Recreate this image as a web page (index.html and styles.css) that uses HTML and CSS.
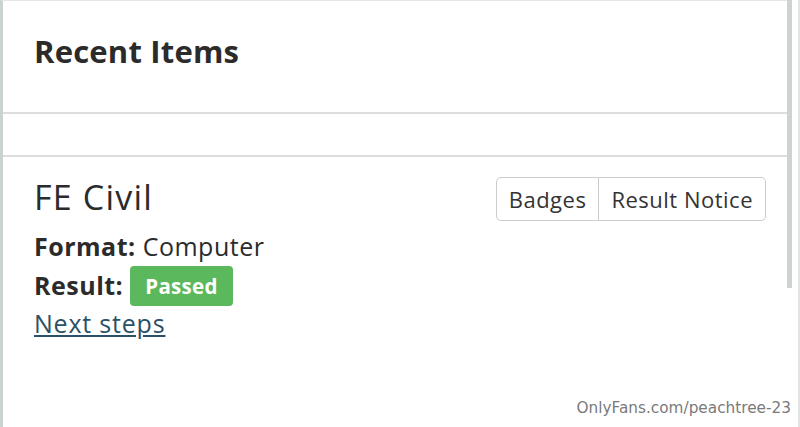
FILE: index.html
```html
<!DOCTYPE html>
<html lang="en">
<head>
    <meta charset="UTF-8">
    <meta name="viewport" content="width=device-width, initial-scale=1.0">
    <title>Recent Items</title>
    <link rel="stylesheet" href="styles.css">
</head>
<body>

<div class="page">
    <div class="panel">
        <div class="panel-head">
            <h2>Recent Items</h2>
        </div>
        <div class="panel-gap"></div>
        <div class="item">
            <div class="item-info">
                <h3>FE Civil</h3>
                <div class="row"><b>Format:</b> Computer</div>
                <div class="row"><b>Result:</b> <span class="badge">Passed</span></div>
                <a class="link" href="#">Next steps</a>
            </div>
            <div class="btn-group">
                <button class="btn">Badges</button>
                <button class="btn">Result Notice</button>
            </div>
        </div>
    </div>
    <div class="scroll">
        <div class="thumb"></div>
    </div>
</div>

<div class="mark">OnlyFans.com/peachtree-23</div>

</body>
</html>
```
FILE: styles.css
```css
body {
    margin: 0;
    padding: 0;
    background: white;
    font-family: "Open Sans", "Noto Sans", sans-serif;
    color: #2b2b2b;
}
.page {
    display: flex;
    height: 427px;
    overflow: hidden;
}
.panel {
    flex: 1;
    border-left: 3px solid #c9d3d2;
    border-top: 1px solid #e4e6e6;
}
.panel-head {
    height: 111px;
    border-bottom: 2px solid #dcdede;
    padding-left: 31px;
}
.panel-head h2 {
    margin: 0;
    padding-top: 29px;
    font-size: 31px;
    font-weight: 700;
    letter-spacing: 0.2px;
}
.panel-gap {
    height: 41px;
    border-bottom: 2px solid #dcdede;
}
.item {
    display: flex;
    justify-content: space-between;
    align-items: flex-start;
    padding: 20px 21px 0 31px;
}
.item h3 {
    margin: 0 0 10px 0;
    font-size: 34px;
    font-weight: 400;
    line-height: 40px;
    letter-spacing: 1.2px;
}
.row {
    font-size: 25px;
    line-height: 39px;
    letter-spacing: 0.5px;
}
.badge {
    display: inline-block;
    background-color: #5cb85c;
    color: white;
    font-size: 20.5px;
    font-weight: 700;
    line-height: 40px;
    padding: 0 15px;
    border-radius: 4px;
    vertical-align: top;
    letter-spacing: 0.3px;
}
.link {
    display: inline-block;
    font-size: 25px;
    line-height: 34px;
    letter-spacing: 0.8px;
    color: #2c5166;
}
.btn-group {
    display: flex;
}
.btn {
    font-family: "Open Sans", "Noto Sans", sans-serif;
    font-size: 22px;
    letter-spacing: 0.5px;
    color: #333;
    background: white;
    border: 1px solid #cccccc;
    height: 44px;
    padding: 0 12px;
}
.btn:first-child {
    border-radius: 5px 0 0 5px;
}
.btn:last-child {
    border-left: none;
    border-radius: 0 5px 5px 0;
}
.scroll {
    flex-shrink: 0;
    width: 11px;
    border-right: 2px solid #dfe3e3;
}
.thumb {
    width: 5px;
    height: 288px;
    background-color: #ccd3d2;
}
.mark {
    position: absolute;
    right: 9px;
    bottom: 10px;
    font-family: "DejaVu Sans", sans-serif;
    font-size: 15.3px;
    color: #7a7a7a;
}
```
